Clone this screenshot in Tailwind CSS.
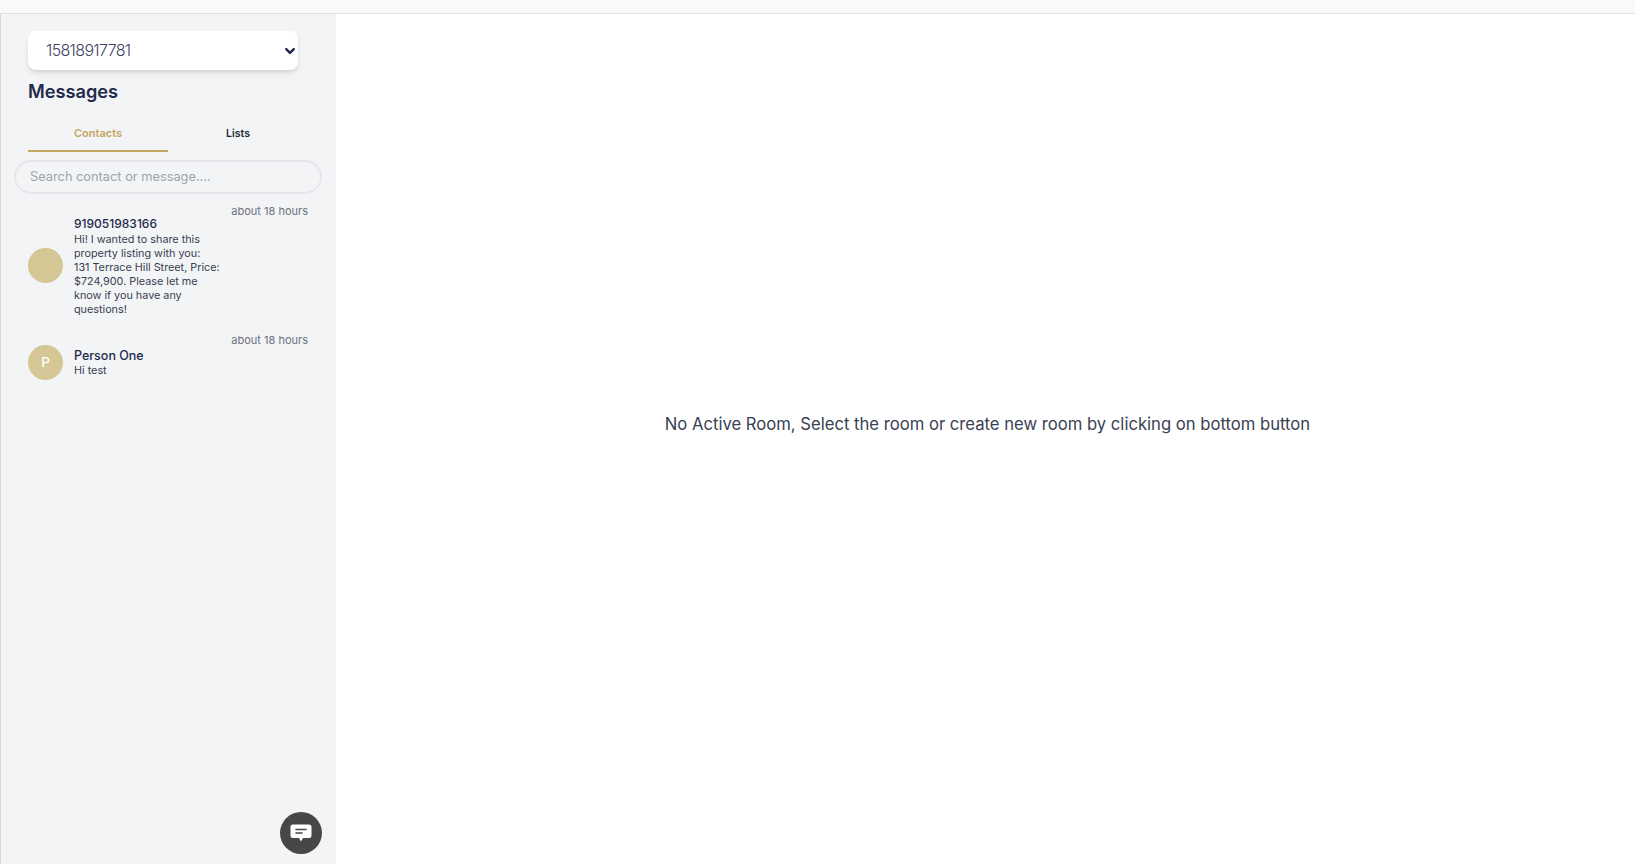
<!DOCTYPE html>
<html lang="en">
<head>
  <meta charset="UTF-8" />
  <title>Messages</title>
  <script src="https://cdn.jsdelivr.net/npm/@tailwindcss/browser@4"></script>
</head>
<body class="h-[864px] overflow-hidden bg-white font-['Inter',sans-serif] text-[#1f2a4d]">
  <!-- top bar -->
  <div class="h-[14px] bg-[#f9f9f9] border-b border-[#dfdfdf]"></div>

  <div class="flex h-[850px]">
    <!-- sidebar -->
    <div class="relative w-[336px] shrink-0 bg-[#f3f4f6] border-l border-[#d9d9d9] pt-[17px]">
      <div class="ml-[27px] w-[270px] h-[39px] flex items-center justify-between pl-[18px] pr-[2px] bg-white rounded-lg shadow-md">
        <span class="text-[16px] tracking-[-0.65px] font-light text-[#3f3f5f] pb-[1px]">15818917781</span>
        <svg class="w-[12px] h-[12px]" viewBox="0 0 16 16" fill="none" stroke="#1f2a4d" stroke-width="3.2" stroke-linecap="round" stroke-linejoin="round"><path d="M3 5.5l5 5 5-5" /></svg>
      </div>
      <h2 class="ml-[27px] mt-[8px] text-[18.2px] leading-[27px] font-semibold text-[#1f2a4d]">Messages</h2>

      <div class="flex ml-[27px] w-[280px] mt-[13px]">
        <div class="w-[140px] h-[34px] border-b-2 border-[#c2a75e] pt-[7px] text-center text-[11px] leading-4 font-semibold text-[#c2a75e]">Contacts</div>
        <div class="w-[140px] pt-[8px] text-center text-[10.5px] leading-4 font-semibold text-[#1f2937]">Lists</div>
      </div>

      <div class="ml-[13px] mt-[8px] w-[308px] h-[34px] flex items-center pl-[14px] rounded-full border-2 border-[#e5e7eb] text-[12.8px] text-[#9ca3af]">Search contact or message....</div>

      <!-- conversations -->
      <div class="mt-[6px]">
        <div class="flex items-center pl-[27px] pr-[27px] relative h-[131px]">
          <span class="absolute right-[28px] top-[3px] text-[11px] leading-4 text-[#6b7280]">about 18 hours</span>
          <div class="w-[35px] h-[35px] rounded-full bg-[#d4c695] shrink-0"></div>
          <div class="ml-[11px] w-[146px]">
            <div class="text-[12px] leading-[18px] font-medium text-[#1f2a4d]">919051983166</div>
            <div class="text-[10.8px] leading-[14px] text-[#374151] whitespace-nowrap">Hi! I wanted to share this<br />property listing with you:<br />131 Terrace Hill Street, Price:<br />$724,900. Please let me<br />know if you have any<br />questions!</div>
          </div>
        </div>
        <div class="flex items-center pl-[27px] pr-[27px] relative h-[62px]">
          <span class="absolute right-[28px] top-[1px] text-[11px] leading-4 text-[#6b7280]">about 18 hours</span>
          <div class="w-[35px] h-[35px] rounded-full bg-[#d4c695] shrink-0 flex items-center justify-center text-white text-[13.5px] font-medium">P</div>
          <div class="ml-[11px] w-[146px]">
            <div class="text-[12.5px] leading-[17px] font-medium text-[#1f2a4d]">Person One</div>
            <div class="text-[10.8px] leading-[14px] text-[#374151]">Hi test</div>
          </div>
        </div>
      </div>

      <!-- new chat button -->
      <div class="absolute left-[279px] top-[798px] w-[42px] h-[42px] rounded-full bg-[#474747] flex items-center justify-center">
        <svg class="w-[24px] h-[24px]" viewBox="0 0 24 24" fill="none">
          <path d="M4 3.500h16A2.500 2.500 0 0 1 22.500 6v8.500A2.500 2.500 0 0 1 20 17h-6l-2 3.500L10 17H4a2.500 2.500 0 0 1-2.500-2.500V6A2.500 2.500 0 0 1 4 3.500z" fill="#fff" />
          <path d="M7 8.500h10M7 12h6" stroke="#474747" stroke-width="1.600" stroke-linecap="round" />
        </svg>
      </div>
    </div>

    <!-- main -->
    <div class="flex-1 bg-white flex justify-center pt-[398px] pl-[4px]">
      <p class="text-[16.65px] leading-6 text-[#374151] h-[24px]">No Active Room, Select the room or create new room by clicking on bottom button</p>
    </div>
  </div>
</body>
</html>
